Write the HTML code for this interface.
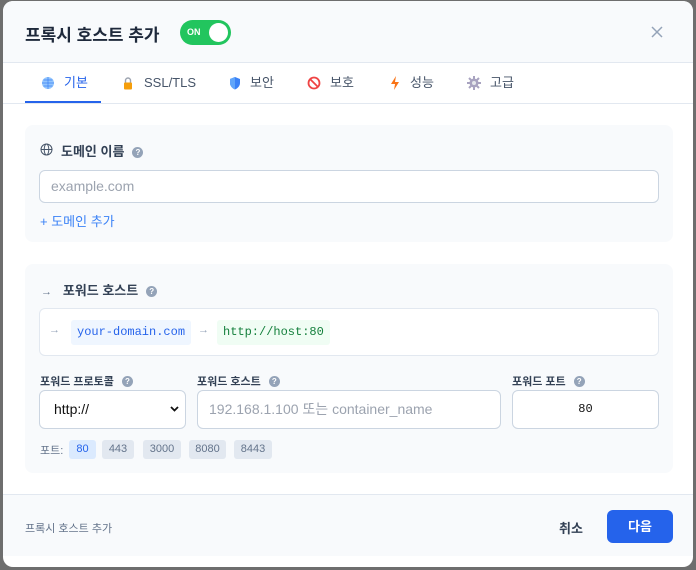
<!DOCTYPE html>
<html><head><meta charset="utf-8"><style>
*{box-sizing:border-box;margin:0;padding:0}
body{width:696px;height:570px;background:#6e6e6e;font-family:"Liberation Sans","Noto Sans CJK KR",sans-serif;overflow:hidden;position:relative}
.m{position:absolute;left:3px;top:1px;width:690px;height:566px;background:#fff;border-radius:10px;overflow:hidden}
.hd{height:62px;background:#f8fafc;border-bottom:1px solid #e2e8f0;position:relative}
.hd h1{position:absolute;left:22px;top:20px;font-size:17px;font-weight:700;color:#1e293b}
.tg{position:absolute;left:177px;top:19px;width:51px;height:25px;background:#22c55e;border-radius:13px}
.tg b{position:absolute;left:7px;top:7px;font-size:9px;color:#fff}
.tg i{position:absolute;right:3px;top:3px;width:19px;height:19px;border-radius:50%;background:#fff}
.tabs{height:41px;border-bottom:1px solid #e2e8f0;position:relative;font-size:13px;color:#475569}
.tab{position:absolute;top:11px;line-height:18px}
.ic{position:absolute;top:13px;width:14px;height:14px}
.ul{position:absolute;left:22px;top:38px;width:76px;height:2px;background:#2563eb}
.card{position:absolute;left:22px;background:#f8fafc;border-radius:8px;width:648px}
.lbl{position:absolute;font-size:13px;font-weight:700;color:#334155}
.q{display:inline-block;width:11px;height:11px;border-radius:50%;background:#94a3b8;color:#fff;font-size:8px;text-align:center;line-height:11px;vertical-align:1px;margin-left:8px}
.inp{position:absolute;background:#fff;border:1px solid #cbd5e1;border-radius:6px;font-size:14px;color:#9ca3af;padding-left:11px}
.sm{position:absolute;font-size:11px;font-weight:700;color:#334155}
.chip{position:absolute;top:439px;height:19px;background:#e2e8f0;border-radius:3px;font-size:11px;color:#64748b;text-align:center;line-height:19px}
.mono{font-family:"Liberation Mono",monospace;font-size:12px}
</style></head><body><div class="m">
<div class="hd"><h1>프록시 호스트 추가</h1><div class="tg"><b>ON</b><i></i></div>
<svg style="position:absolute;left:648px;top:25px" width="12" height="12" viewBox="0 0 12 12"><path d="M1 1L11 11M11 1L1 11" stroke="#94a3b8" stroke-width="1.5"/></svg></div>
<div class="tabs">
<svg class="ic" style="left:38px" viewBox="0 0 14 14"><circle cx="7" cy="7" r="6" fill="#93c5fd"/><path d="M1 7h12M7 1v12M2.5 4h9M2.5 10h9" stroke="#3b82f6" stroke-width=".7" fill="none"/></svg>
<span class="tab" style="left:61px;color:#2563eb">기본</span>
<svg class="ic" style="left:118px" viewBox="0 0 14 14"><path d="M4.5 7V4.5a2.5 2.5 0 015 0V7" stroke="#9ca3af" stroke-width="1.4" fill="none"/><rect x="3" y="6.5" width="8" height="7" rx="1" fill="#f59e0b"/></svg>
<span class="tab" style="left:141px">SSL/TLS</span>
<svg class="ic" style="left:225px" viewBox="0 0 14 14"><path d="M7 1L12 3v4c0 3-2.5 5.5-5 6.5C4.5 12.5 2 10 2 7V3z" fill="#3b82f6"/><path d="M7 1L2 3v4c0 3 2.5 5.5 5 6.5z" fill="#60a5fa"/></svg>
<span class="tab" style="left:247px">보안</span>
<svg class="ic" style="left:304px" viewBox="0 0 14 14"><circle cx="7" cy="7" r="5.5" stroke="#ef4444" stroke-width="1.8" fill="none"/><path d="M3 3l8 8" stroke="#ef4444" stroke-width="1.8"/></svg>
<span class="tab" style="left:327px">보호</span>
<svg class="ic" style="left:385px" viewBox="0 0 14 14"><path d="M8 0L3 8h4l-1 6 5-8H7z" fill="#f97316"/></svg>
<span class="tab" style="left:407px">성능</span>
<svg class="ic" style="left:464px" viewBox="0 0 14 14"><circle cx="7" cy="7" r="4.5" fill="#a8a3c0"/><path d="M7 0v14M0 7h14M2 2l10 10M12 2L2 12" stroke="#a8a3c0" stroke-width="2"/><circle cx="7" cy="7" r="2" fill="#e5e7eb"/></svg>
<span class="tab" style="left:487px">고급</span>
<div class="ul"></div></div>
<div class="card" style="top:124px;height:117px"></div>
<svg style="position:absolute;left:37px;top:142px" width="13" height="13" viewBox="0 0 13 13"><circle cx="6.5" cy="6.5" r="5.5" stroke="#475569" fill="none"/><ellipse cx="6.5" cy="6.5" rx="2.3" ry="5.5" stroke="#475569" fill="none"/><path d="M1 6.5h11" stroke="#475569"/></svg>
<div class="lbl" style="left:58px;top:140px">도메인 이름<span class="q">?</span></div>
<div class="inp" style="left:36px;top:169px;width:620px;height:33px;line-height:31px">example.com</div>
<div style="position:absolute;left:37px;top:210px;font-size:13px;color:#3b82f6">+ 도메인 추가</div>
<div class="card" style="top:263px;height:209px"></div>
<div class="lbl" style="left:38px;top:279px"><span style="font-weight:400;color:#64748b;font-size:11px">→</span>&nbsp;&nbsp; 포워드 호스트<span class="q">?</span></div>
<div style="position:absolute;left:36px;top:307px;width:620px;height:48px;background:#fff;border:1px solid #e2e8f0;border-radius:6px"></div>
<div style="position:absolute;left:46px;top:323px;color:#94a3b8;font-size:11px">→</div>
<div class="mono" style="position:absolute;left:68px;top:319px;height:25px;line-height:25px;padding:0 6px;background:#eff6ff;color:#2563eb;border-radius:3px">your-domain.com</div>
<div style="position:absolute;left:195px;top:323px;color:#94a3b8;font-size:11px">→</div>
<div class="mono" style="position:absolute;left:214px;top:319px;height:25px;line-height:25px;padding:0 6px;background:#f0fdf4;color:#15803d;border-radius:3px">http://host:80</div>
<div class="sm" style="left:37px;top:372px">포워드 프로토콜<span class="q">?</span></div>
<div class="sm" style="left:194px;top:372px">포워드 호스트<span class="q">?</span></div>
<div class="sm" style="left:509px;top:372px">포워드 포트<span class="q">?</span></div>
<div class="inp" style="left:36px;top:389px;width:147px;height:39px;line-height:37px;color:#111;padding-left:14px">http://<svg style="position:absolute;right:6px;top:15px" width="9" height="6" viewBox="0 0 9 6"><path d="M1 1l3.5 3.5L8 1" stroke="#111" stroke-width="1.8" fill="none"/></svg></div>
<div class="inp" style="left:194px;top:389px;width:304px;height:39px;line-height:37px">192.168.1.100 또는 container_name</div>
<div class="inp mono" style="left:509px;top:389px;width:147px;height:39px;line-height:37px;color:#111;text-align:center;padding:0">80</div>
<div style="position:absolute;left:37px;top:441px;font-size:11px;color:#64748b">포트:</div>
<div class="chip" style="left:66px;width:27px;background:#dbeafe;color:#2563eb">80</div>
<div class="chip" style="left:99px;width:32px">443</div>
<div class="chip" style="left:140px;width:38px">3000</div>
<div class="chip" style="left:186px;width:37px">8080</div>
<div class="chip" style="left:231px;width:38px">8443</div>
<div style="position:absolute;left:0;top:493px;width:690px;height:62px;background:#f8fafc;border-top:1px solid #e2e8f0"></div>
<div style="position:absolute;left:22px;top:519px;font-size:11px;color:#64748b">프록시 호스트 추가</div>
<div style="position:absolute;left:556px;top:517px;font-size:13px;font-weight:700;color:#334155">취소</div>
<div style="position:absolute;left:604px;top:509px;width:66px;height:33px;background:#2563eb;border-radius:6px;color:#fff;font-size:13px;font-weight:700;text-align:center;line-height:33px">다음</div>
</div></body></html>
